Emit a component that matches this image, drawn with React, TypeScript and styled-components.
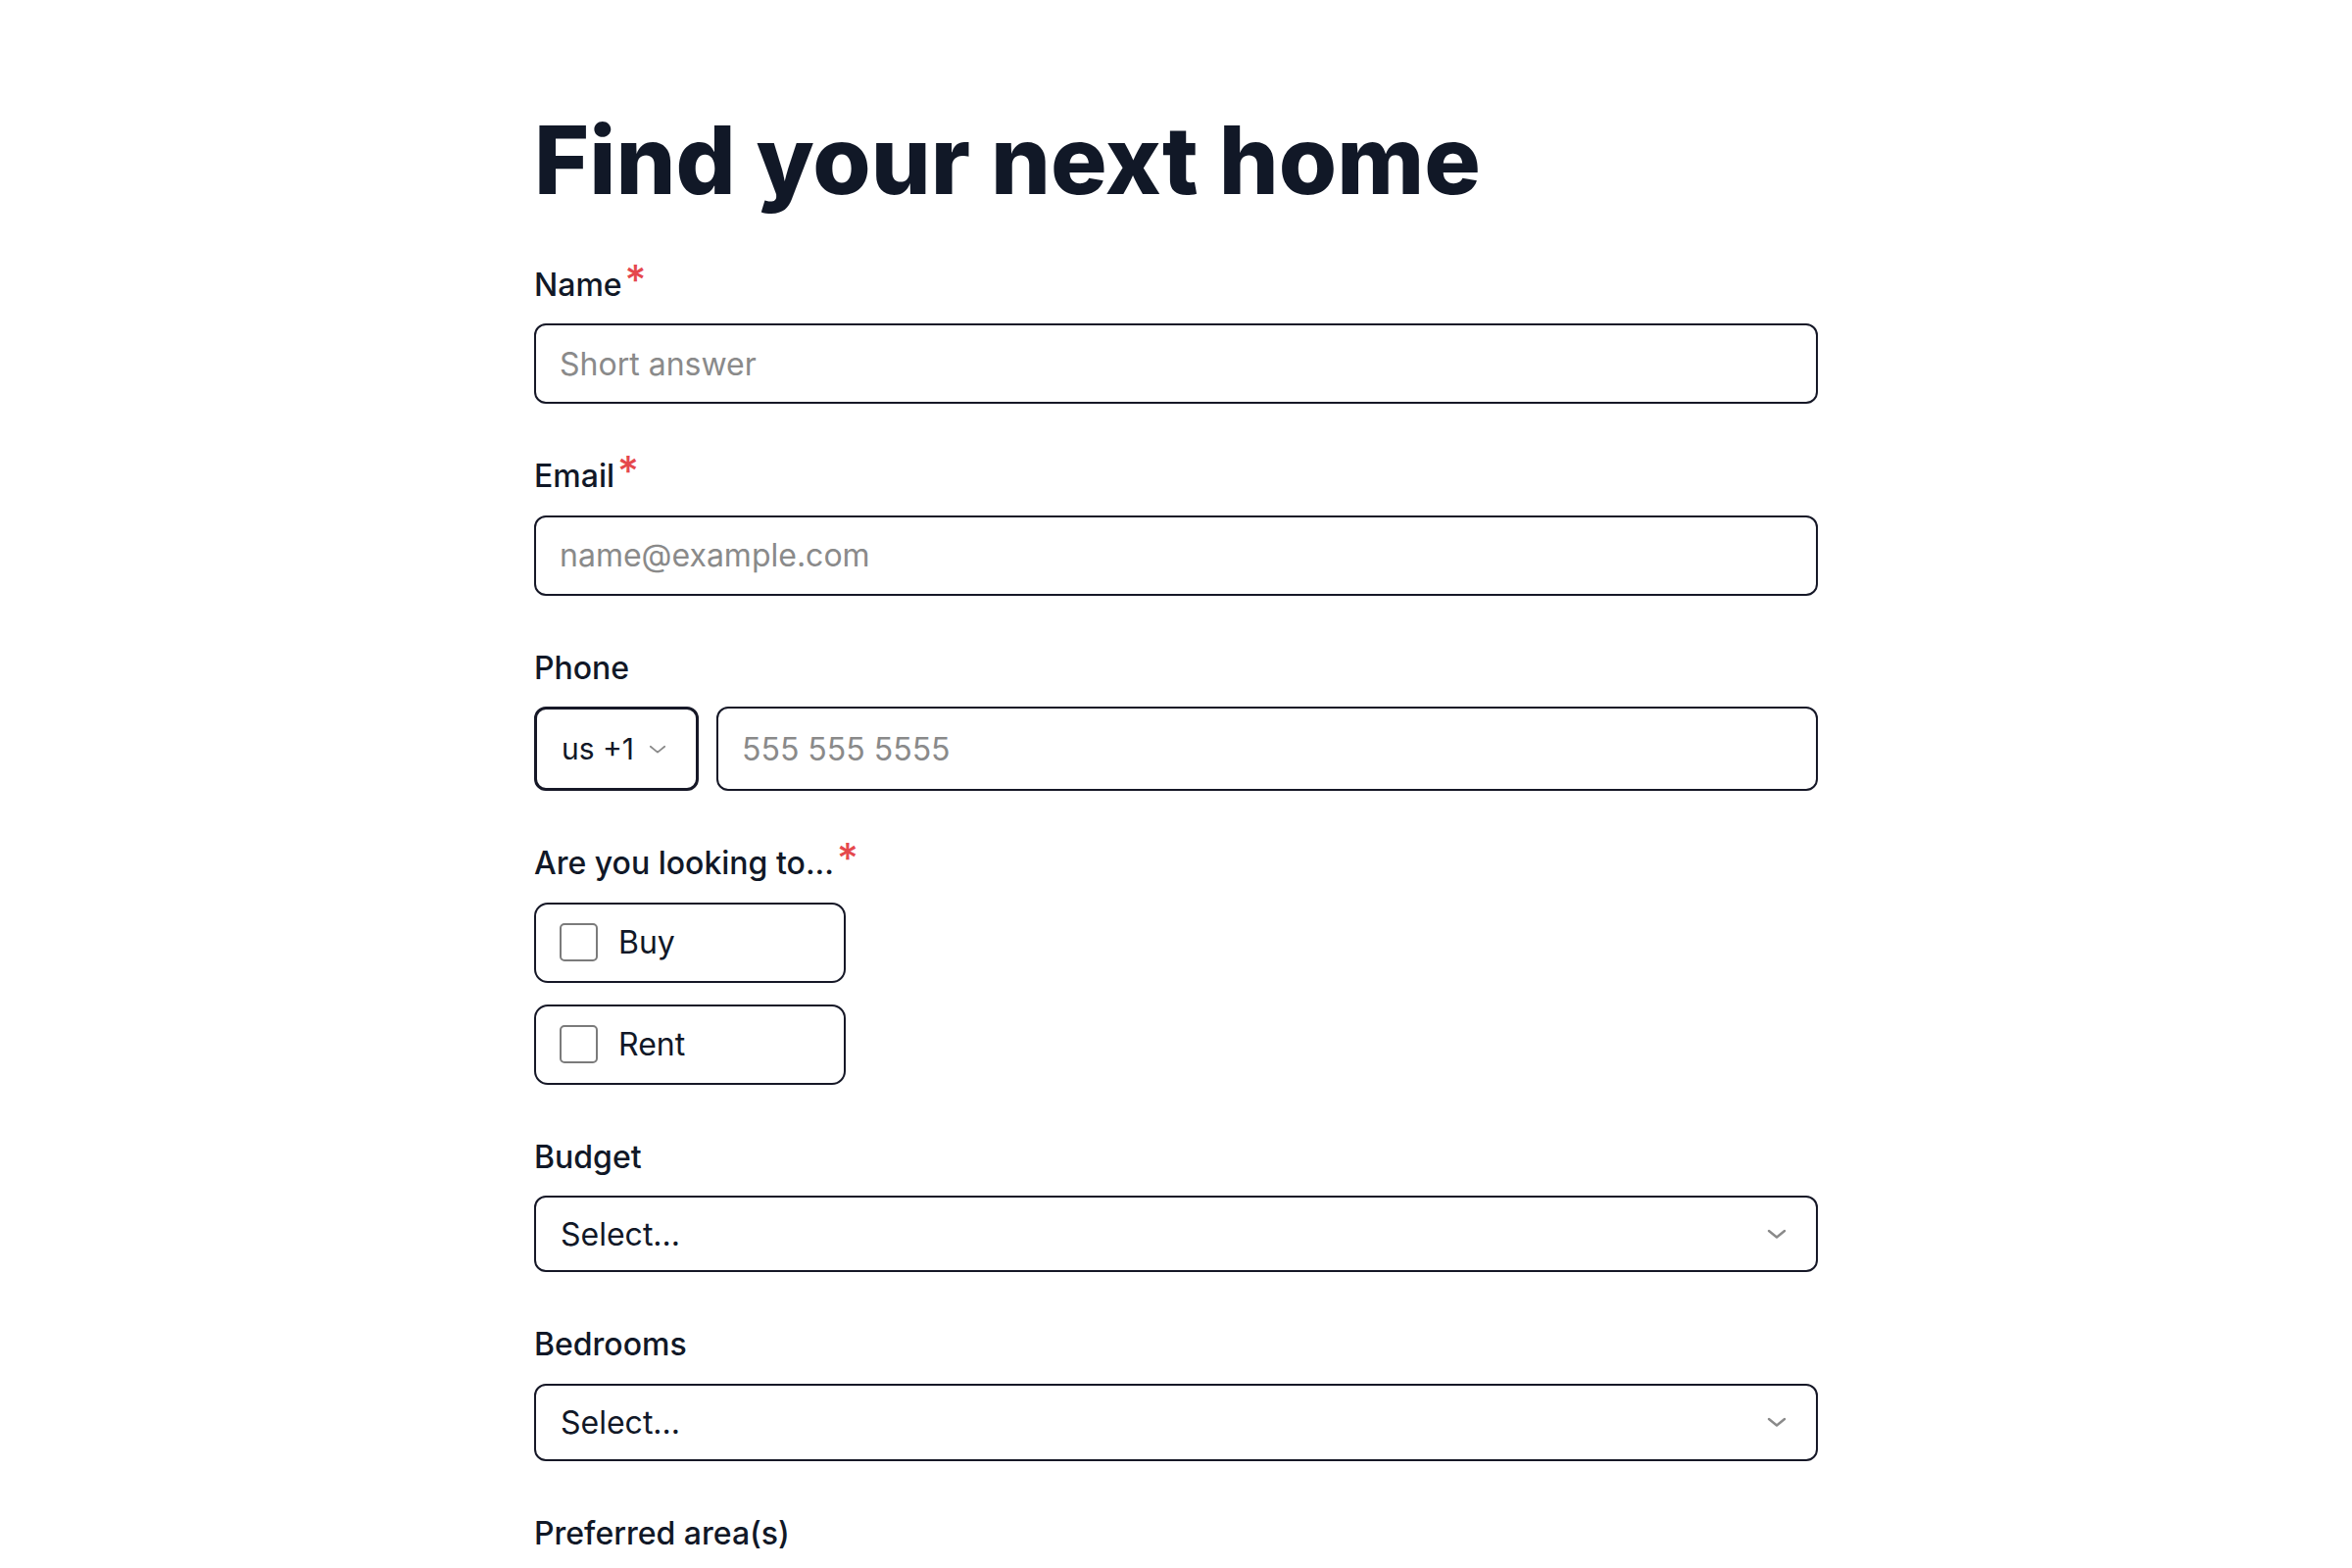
import React from "react";
import styled, { createGlobalStyle } from "styled-components";

const GlobalStyle = createGlobalStyle`
  html, body {
    margin: 0;
    padding: 0;
    background: #ffffff;
  }
  body {
    font-family: Inter, "Noto Sans", "Liberation Sans", sans-serif;
    color: #111827;
  }
  * { box-sizing: border-box; }
`;

const Page = styled.main`
  width: 1310px;
  margin: 0 auto;
  padding-top: 106px;
  padding-bottom: 80px;
`;

const Title = styled.h1`
  margin: 0 0 46.5px 0;
  font-size: 96px;
  line-height: 115px;
  font-weight: 800;
  letter-spacing: 0;
  color: #111827;
`;

const Form = styled.form`
  display: flex;
  flex-direction: column;
  gap: 51.1px;
`;

const Field = styled.div`
  display: flex;
  flex-direction: column;
  gap: 17.5px;
`;

const Label = styled.label`
  display: flex;
  align-items: flex-start;
  font-size: 32px;
  line-height: 45px;
  font-weight: 500;
  color: #111827;
`;

const Required = styled.span`
  color: #e5484d;
  font-size: 42px;
  font-weight: 500;
  line-height: 1;
  margin-left: 3px;
  transform: translateY(-3px);
`;

const TextInput = styled.input`
  width: 100%;
  height: 82px;
  border: 2px solid #161827;
  border-radius: 12px;
  padding: 0 24px;
  font-family: inherit;
  font-size: 32px;
  color: #111827;
  background: #fff;
  outline: none;
  &::placeholder {
    color: #8a8a8a;
  }
`;

const PhoneRow = styled.div`
  display: flex;
  gap: 18px;
  height: 86px;
`;

const CountryButton = styled.button`
  flex: 0 0 168px;
  display: flex;
  align-items: center;
  gap: 15px;
  padding: 0 0 0 25px;
  border: 3px solid #161827;
  border-radius: 12px;
  background: #fff;
  font-family: inherit;
  font-size: 30px;
  color: #111827;
  cursor: pointer;
`;

const PhoneInput = styled(TextInput)`
  flex: 1;
  height: 86px;
`;

const Options = styled.div`
  display: flex;
  flex-direction: column;
  gap: 22px;
`;

const OptionCard = styled.label`
  width: 318px;
  height: 82px;
  display: flex;
  align-items: center;
  gap: 21px;
  padding: 0 0 0 24px;
  border: 2px solid #161827;
  border-radius: 14px;
  font-size: 32px;
  color: #111827;
  cursor: pointer;
`;

const Box = styled.span`
  flex: 0 0 39px;
  width: 39px;
  height: 39px;
  border: 2px solid #7b7b7b;
  border-radius: 5px;
  background: #fff;
`;

const SelectButton = styled.button<{ $h: number }>`
  width: 100%;
  height: ${(p) => p.$h}px;
  display: flex;
  align-items: center;
  justify-content: space-between;
  padding: 0 30px 0 25px;
  border: 2px solid #161827;
  border-radius: 12px;
  background: #fff;
  font-family: inherit;
  font-size: 32px;
  color: #111827;
  text-align: left;
  cursor: pointer;
`;

const Chevron = ({ size, width }: { size: number; width: number }) => (
  <svg
    width={size}
    height={size / 2}
    viewBox="0 0 20 10"
    fill="none"
    stroke="#8a8a8a"
    strokeWidth={width}
    strokeLinecap="round"
    strokeLinejoin="round"
  >
    <path d="M2 2 L10 8.5 L18 2" />
  </svg>
);

const RequiredMark = () => <Required>*</Required>;

export default function App() {
  return (
    <>
      <GlobalStyle />
      <Page>
        <Title>Find your next home</Title>
        <Form onSubmit={(e) => e.preventDefault()}>
          <Field>
            <Label>
              Name
              <RequiredMark />
            </Label>
            <TextInput placeholder="Short answer" />
          </Field>
          <Field>
            <Label>
              Email
              <RequiredMark />
            </Label>
            <TextInput placeholder="name@example.com" />
          </Field>
          <Field>
            <Label>Phone</Label>
            <PhoneRow>
              <CountryButton type="button">
                <span>us +1</span>
                <Chevron size={18} width={2} />
              </CountryButton>
              <PhoneInput placeholder="555 555 5555" />
            </PhoneRow>
          </Field>
          <Field>
            <Label>
              Are you looking to...
              <RequiredMark />
            </Label>
            <Options>
              <OptionCard>
                <Box />
                Buy
              </OptionCard>
              <OptionCard>
                <Box />
                Rent
              </OptionCard>
            </Options>
          </Field>
          <Field>
            <Label>Budget</Label>
            <SelectButton type="button" $h={78}>
              <span>Select...</span>
              <Chevron size={20} width={2.4} />
            </SelectButton>
          </Field>
          <Field>
            <Label>Bedrooms</Label>
            <SelectButton type="button" $h={79}>
              <span>Select...</span>
              <Chevron size={20} width={2.4} />
            </SelectButton>
          </Field>
          <Field>
            <Label>Preferred area(s)</Label>
          </Field>
        </Form>
      </Page>
    </>
  );
}
